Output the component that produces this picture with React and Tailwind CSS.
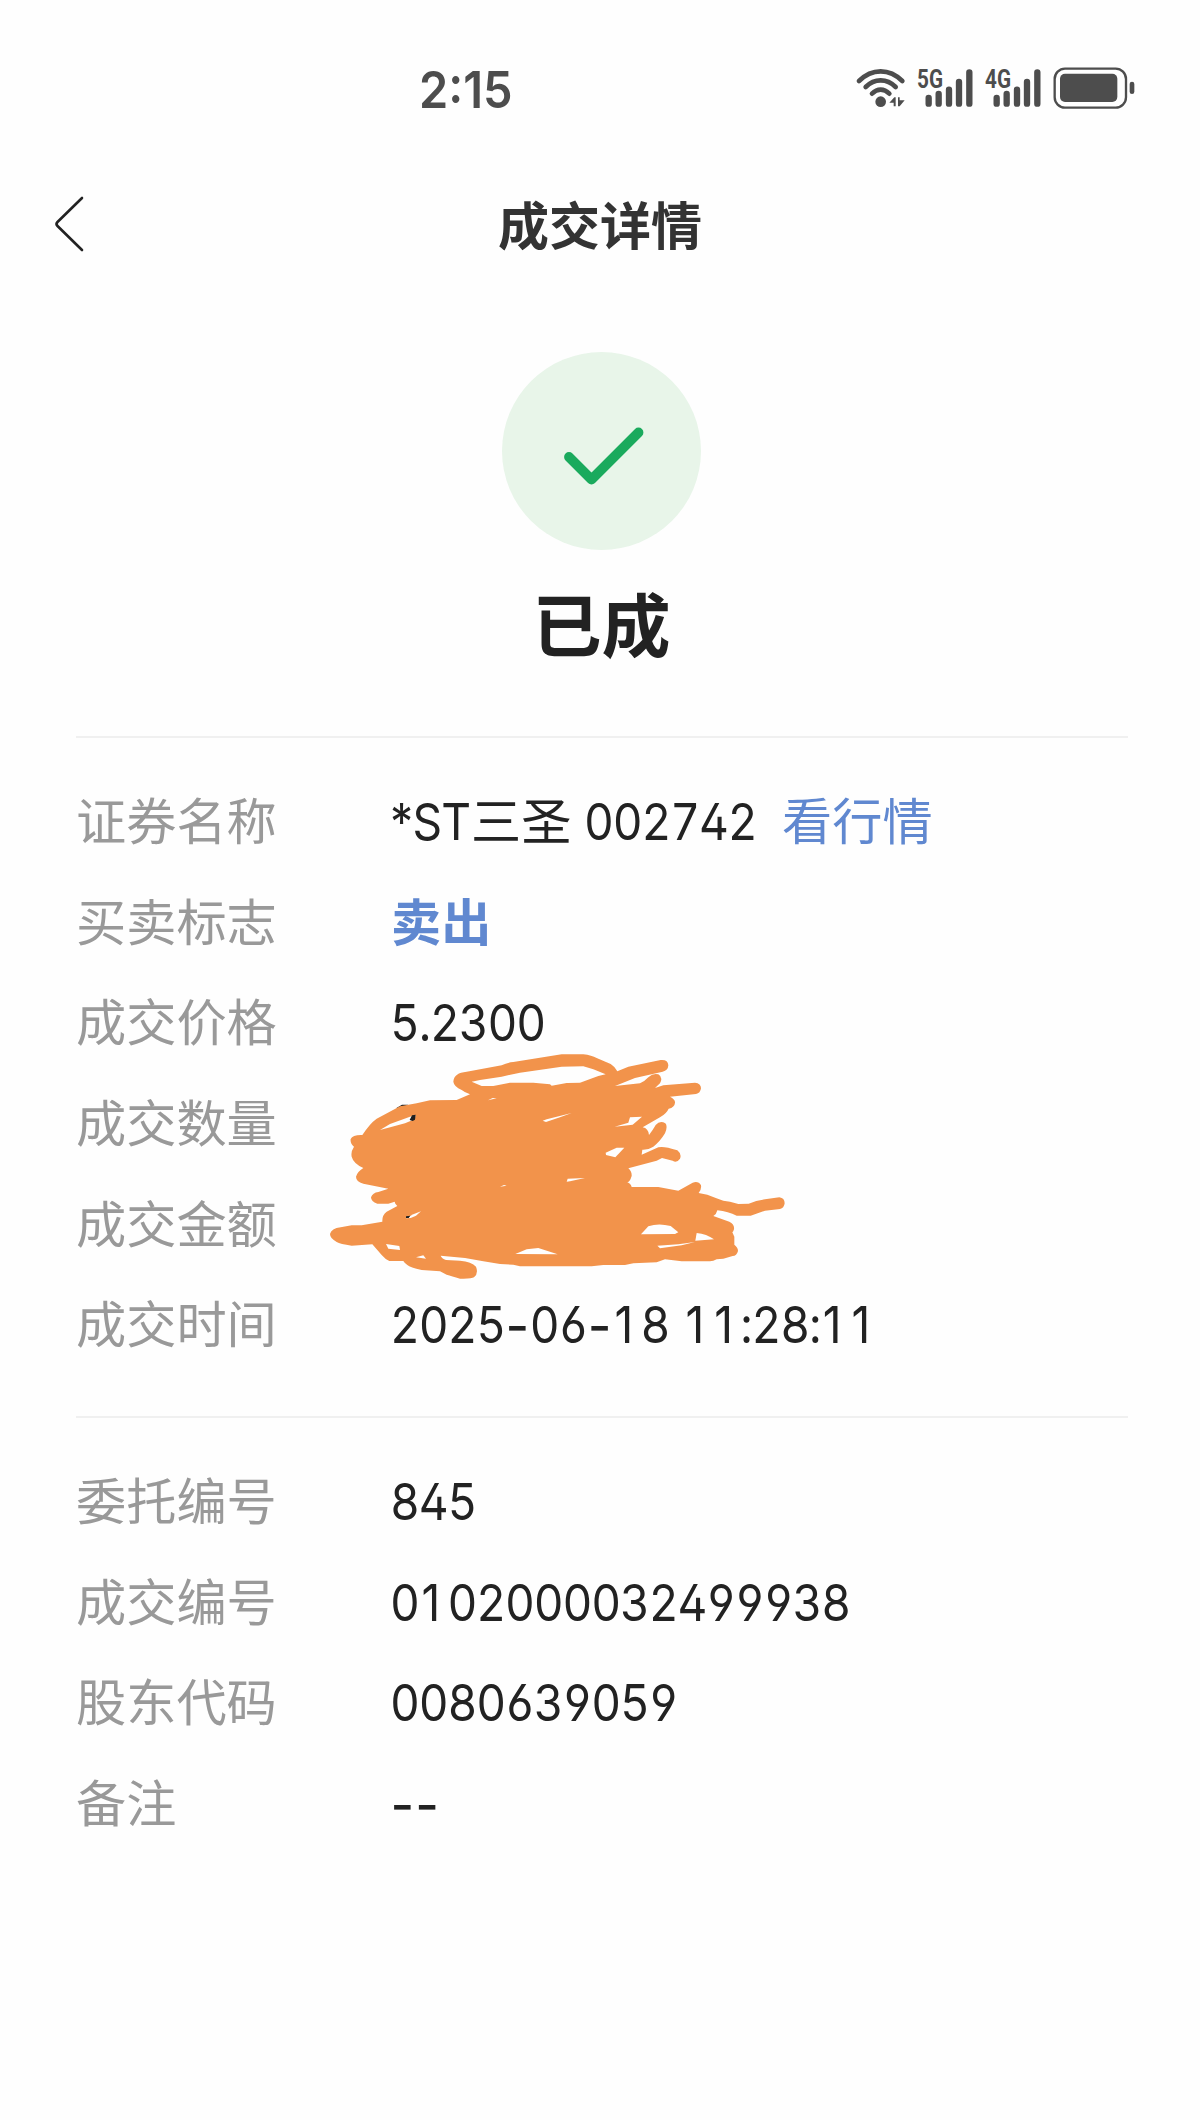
const holes = [
  'M455,125 L480,120 545,110 600,98 725,80 790,79 820,88 857,103 835,108 780,128 740,129 695,137 690,133 640,128 570,128 520,138 485,138Z',
  'M180,270 L210,252 270,230 287,225 284,238 255,250Z',
  'M668,242 L680,238 755,219 720,232 678,246Z',
  'M884,260 L925,248 930,232 966,230 938,254Z',
  'M857,338 L890,323 913,323 886,352 858,345Z',
  'M743,416 L795,414 750,424 740,425Z',
  'M504,181 L518,174 530,175Z',
  'M540,440 L552,435 560,437Z',
  'M258,535 L280,523 303,514 288,527 272,534Z',
  'M963,583 L985,559 Q1015,548 1052,558 L1075,577 1065,582Z',
  'M1130,579 Q1160,582 1182,598 L1126,602Z',
  'M1012,617 L1075,613 1125,606 1085,616 1020,625Z',
  'M586,642 L620,628 655,624 713,643Z',
  'M198,612 L238,618 240,630 205,626Z',
  'M288,652 L310,646 318,656Z',
];

const outline =
  'M400,125 C402,105 415,98 440,95 L545,76 Q560,68 580,66 L725,43 L790,43 Q815,46 830,54 L872,72 Q885,80 892,94 L925,80 L1022,60 Q1044,58 1045,76 Q1044,92 1028,95 L945,114 L885,138 L960,130 Q972,126 985,112 Q1000,98 1015,103 Q1030,112 1020,130 L1005,144 L1030,136 L1125,128 Q1143,130 1143,145 Q1141,160 1128,162 L1050,170 Q1066,178 1065,188 Q1064,202 1046,206 Q1040,220 1020,232 L968,262 Q985,265 987,285 Q1000,268 1007,255 Q1020,240 1036,250 Q1044,258 1035,280 Q1020,305 1000,320 Q985,330 967,329 L965,344 L1015,322 Q1030,317 1072,331 Q1086,342 1080,356 Q1070,370 1058,362 L1026,354 L1010,362 L925,385 Q936,395 935,408 Q930,425 922,427 Q932,430 935,441 L1015,441 L1075,452 L1118,428 Q1135,422 1143,436 Q1145,448 1136,459 L1162,464 Q1190,475 1210,482 L1230,485 L1255,492 L1286,491 Q1310,480 1335,478 L1378,472 Q1394,474 1394,490 Q1392,505 1380,507 L1335,512 L1292,527 L1250,527 Q1225,515 1192,511 Q1190,522 1180,528 L1228,545 Q1244,553 1242,568 Q1240,575 1237,577 L1243,590 L1243,614 Q1254,622 1254,633 Q1250,648 1238,648 L1210,656 L1190,658 Q1180,664 1170,664 L1085,664 L1035,658 L1010,667 L940,670 L915,675 L850,675 L815,679 L600,679 L580,674 L540,672 L490,664 L435,654 L362,647 Q365,655 378,660 L420,662 Q455,665 468,680 Q476,700 462,712 Q455,717 420,716 Q395,708 380,704 L360,694 L305,690 Q270,682 262,675 Q252,668 250,663 L208,663 Q195,657 185,645 L172,630 L157,613 L95,617 Q60,612 50,606 Q30,595 30,582 Q34,565 62,562 L95,556 L125,556 L187,545 Q186,525 200,515 L232,498 Q224,490 224,485 L205,491 L172,491 Q153,485 153,472 Q158,458 175,456 L205,446 L130,431 Q108,425 108,410 Q112,395 130,384 Q100,370 95,350 Q92,335 102,320 Q90,310 92,297 Q98,284 127,285 Q150,250 170,236 L240,199 L290,190 L330,181 L410,180 L450,163 Q435,158 425,150 Q402,140 400,125Z';

function Scribble() {
  return (
    <svg viewBox="0 0 1440 750" className="pointer-events-none absolute left-[244px] top-[302px] h-[250px] w-[480px]">
      <path d="M228,205 L246,194 264,194 252,205Z" fill="#1f1f1f" />
      <path d={outline} fill="#f2934b" />
      {holes.map((d) => (
        <path key={d} d={d} fill="#fefefe" />
      ))}
      <path d="M269,240 L276,226 287,224 285,239 278,243Z M258,529 L271,527 266,534 258,534Z" fill="#1f1f1f" />
    </svg>
  );
}

function Signal({ x, label }) {
  return (
    <g transform={`translate(${x} 0)`}>
      <text x="-2" y="113" fontSize="76" fontWeight="700" textLength="78" lengthAdjust="spacingAndGlyphs" fill="#4d4d4d" fontFamily="Roboto, sans-serif">
        {label}
      </text>
      <g stroke="#4d4d4d" strokeWidth="19" strokeLinecap="round">
        <path d="M33 144V161M63 132V161M94 119V161M124 96V161M155 67V161" />
      </g>
    </g>
  );
}

function StatusIcons() {
  return (
    <svg viewBox="0 0 930 240" className="h-[80px] w-[310px]">
      <g fill="none" stroke="#4d4d4d" strokeWidth="14" strokeLinecap="round">
        <path d="M57 93Q86 64 122 64T187 93" />
        <path d="M77 111Q97 91 122 91T167 111" />
        <path d="M96 131Q108 119 122 119T148 131" />
      </g>
      <circle cx="122" cy="155" r="16" fill="#4d4d4d" />
      <path d="M148 158L163 142H167V169H161V158ZM174 142H179V151H194L179 169H174Z" fill="#4d4d4d" />
      <Signal x={233} label="5G" />
      <Signal x={437} label="4G" />
      <rect x="644" y="56" width="214" height="117" rx="31" fill="none" stroke="#4d4d4d" strokeWidth="7" />
      <rect x="660" y="71" width="172" height="85" rx="15" fill="#4d4d4d" />
      <rect x="869" y="95" width="14" height="37" rx="7" fill="#4d4d4d" />
    </svg>
  );
}

/* Glyphs whose tabular form is unwanted sit in a cell of fixed width. */
const cells = {
  '-': "inline-block w-[27.300px] text-center align-[-3px] text-[57px] leading-none tracking-normal [font-feature-settings:'tnum'_0]",
  '1': "inline-block w-[31.700px] pr-[5px] text-center tracking-normal [font-feature-settings:'tnum'_0]",
};

/* Latin text and figures: condensed Inter with tabular, open-shaped digits. */
function Figures({ children }) {
  return (
    <span className="-ml-px block origin-left scale-x-[0.905] whitespace-pre pt-[2px] font-['Inter',sans-serif] text-[51px] tracking-[-1.3px] [word-spacing:2.500px] [font-feature-settings:'tnum','cv02','cv03','cv04']">
      {children.split(/([-1])/).filter(Boolean).map((part, i) =>
        cells[part] ? (
          <span key={i} className={cells[part]}>
            {part}
          </span>
        ) : (
          part
        ),
      )}
    </span>
  );
}

function Row({ label, children }) {
  return (
    <div className="flex h-[100.6px] items-center">
      <div className="w-[315px] shrink-0 pb-[6px] text-[#999999]">{label}</div>
      <div className="flex items-center whitespace-pre text-[#222222]">{children}</div>
    </div>
  );
}

export default function App() {
  return (
    <div className="flex h-[2120px] w-[1200px] flex-col overflow-hidden bg-[#fefefe] font-['Noto_Sans_CJK_SC',sans-serif] text-[50.2px] leading-[60px]">
      <div className="flex h-[130px] shrink-0 items-start justify-between pl-[419px] pr-[50px] pt-[50px] text-[#4d4d4d]">
        <span className="block origin-left scale-x-[0.92] pt-[10px] font-['Inter',sans-serif] text-[51px] font-semibold">2:15</span>
        <StatusIcons />
      </div>
      <div className="grid h-[190px] shrink-0 grid-cols-[1fr_auto_1fr] items-start px-[50px] pt-[60px]">
        <svg viewBox="0 0 40 64" className="h-[64px] w-[40px]" fill="none" stroke="#222222" strokeWidth="2.6" strokeLinecap="round" strokeLinejoin="round">
          <path d="M32 8L7.5 32Q5.500 34 7.500 36L32 60" />
        </svg>
        <h1 className="pt-[3px] text-[51px] font-bold text-[#333333]">成交详情</h1>
      </div>
      <div className="flex h-[416px] shrink-0 flex-col items-center gap-8 pl-[3px] pt-8">
        <svg viewBox="0 0 199 198" className="h-[198px] w-[199px]" fill="none">
          <ellipse cx="99.5" cy="99" rx="99.5" ry="99" fill="#e8f5e9" />
          <path d="M67 105L89.500 127.500L136.500 80.500" stroke="#1aaa5d" strokeWidth="9.800" strokeLinecap="round" strokeLinejoin="round" />
        </svg>
        <h2 className="text-[69px] font-bold leading-[80px] text-[#222222]">已成</h2>
      </div>
      <div className="flex flex-col pl-[76px] pr-[72px]">
        <div className="relative h-[680px] border-t-2 border-[#f0f0f0] pt-[33px]">
          <Row label="证券名称">
            <span className="flex w-[391px] items-center">
              <span className="w-[80px]">
                <span className="-ml-px block origin-left scale-x-[0.905] pt-[2px] font-['Inter',sans-serif] text-[51px] tracking-[-0.800px]">*ST</span>
              </span>
              <span className="w-[114px] pb-[6px]">三圣</span>
              <Figures>002742</Figures>
            </span>
            <span className="pb-[6px] text-[#6088d0]">看行情</span>
          </Row>
          <Row label="买卖标志">
            <span className="pb-[6px] font-bold text-[#6088d0]">卖出</span>
          </Row>
          <Row label="成交价格">
            <Figures>5.2300</Figures>
          </Row>
          <Row label="成交数量" />
          <Row label="成交金额" />
          <Row label="成交时间">
            <Figures>2025-06-18 11:28:11</Figures>
          </Row>
          <Scribble />
        </div>
        <div className="border-t-2 border-[#f0f0f0] pt-[33px]">
          <Row label="委托编号">
            <Figures>845</Figures>
          </Row>
          <Row label="成交编号">
            <Figures>0102000032499938</Figures>
          </Row>
          <Row label="股东代码">
            <Figures>0080639059</Figures>
          </Row>
          <Row label="备注">
            <Figures>--</Figures>
          </Row>
        </div>
      </div>
    </div>
  );
}
